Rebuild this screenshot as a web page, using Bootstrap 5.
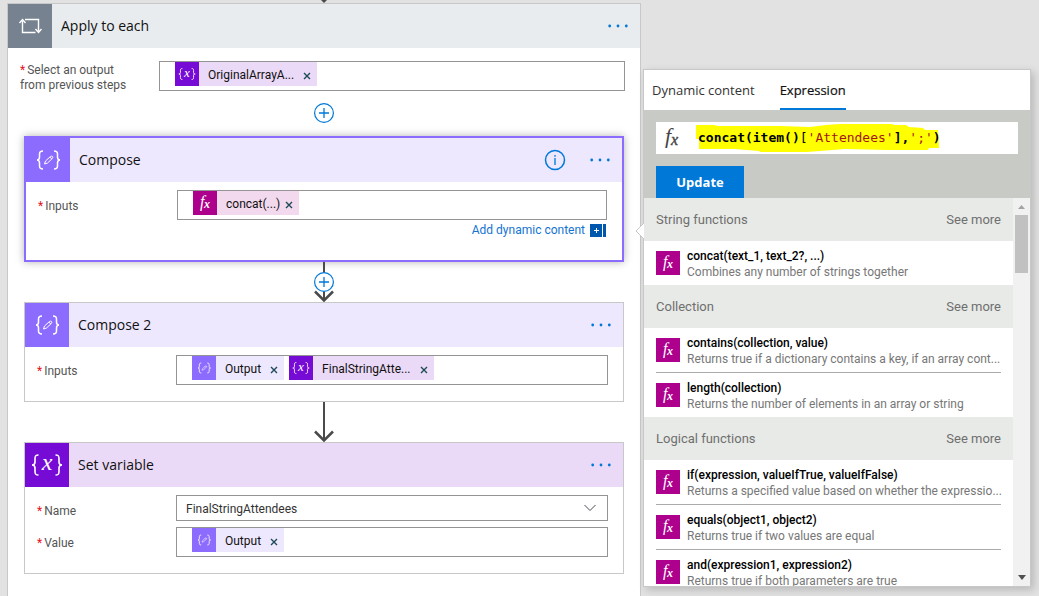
<!DOCTYPE html>
<html lang="en">
<head>
<meta charset="utf-8">
<meta name="viewport" content="width=device-width, initial-scale=1">
<title>Flow designer</title>
<link href="https://cdn.jsdelivr.net/npm/bootstrap@5.3.0/dist/css/bootstrap.min.css" rel="stylesheet">
<style>
  :root { --blue: #0078d7; --edge: #c8c8c8; --field: #949494; }
  body { background: #e2e2e2; color: #111; font: 12px/16px Roboto, sans-serif; }
  button { font: inherit; }
  svg text { font-family: "Liberation Serif", serif; font-style: italic; }

  .designer { gap: 2px; padding: 0 8px 0 7px; }
  .canvas { min-width: 0; }
  .incoming { height: 3px; }
  .scope { background: #fff; border: 1px solid var(--edge); border-bottom: 0; }

  /* step cards */
  .step { background: #fff; border: 1px solid var(--edge); margin: 0 16px; }
  .step.selected { border: 2px solid #8c6cff; box-shadow: 0 0 8px rgba(0,0,0,.3); }
  .step-head { height: 44px; padding-right: 12px; }
  .step-head h2 { font-family: "Open Sans", sans-serif; font-size: 14px; line-height: 20px; font-weight: 400; margin: 0; padding-left: 9px; }
  .tile { width: 44px; height: 44px; color: #fff; flex: none; }
  .t-loop { background: #e8ecef; } .t-loop .tile { background: #76828f; }
  .t-data { background: #eee8ff; } .t-data .tile { background: #8c6cff; }
  .t-var { background: #ebdaf7; } .t-var .tile { background: #770bd6; }
  .plain { background: none; border: 0; padding: 0; color: var(--blue); display: block; }
  .field-list { padding: 8px 15px 16px 12px; gap: 6px; }
  .selected .field-list { gap: 4px; }
  .scope-fields { padding: 13px 15px 10px 12px; }
  .field-row { display: flex; }
  .field-row > label { flex: 0 0 139px; color: #555; line-height: 15px; padding-top: 9px; }
  .field-row > label::before { content: "*"; color: #e81123; margin-right: 2px; }
  .scope-fields .field-row > label { padding-top: 2px; }
  .token-box { flex: 1 1 0; min-width: 0; height: 30px; border: 1px solid var(--field); background: #fff; padding-left: 15px; gap: 5px; display: flex; }
  .token-box input { flex: 1 1 0; min-width: 0; border: 0; outline: 0; background: none; height: 24px; }
  .field-row select.form-select { flex: 1 1 0; min-width: 0; height: 26px; border: 1px solid var(--field); border-radius: 0; padding: 3px 30px 0 9px; font-size: 12px; line-height: 21px; color: #333;
    background: #fff url("data:image/svg+xml,%3Csvg xmlns='http://www.w3.org/2000/svg' viewBox='0 0 12 8'%3E%3Cpath fill='none' stroke='%23514654' d='M.5 1 6 6.500 11.500 1'/%3E%3C/svg%3E") no-repeat right 11px center / 12px 8px; }
  .token { height: 24px; line-height: 24px; display: flex; align-items: center; padding-right: 6px; flex: none; }
  .token > svg { width: 24px; height: 24px; color: #fff; margin-right: 9px; }
  .token-text { padding-top: 2px; }
  .token button { background: none; border: 0; padding: 3px 0 0; margin-left: 9px; color: #1c4a57; line-height: 0; }
  .k-var { background: #ebdaf7; } .k-var > svg { background: #770bd6; }
  .k-data { background: #eee8ff; } .k-data > svg { background: #8c6cff; }
  .k-fx { background: #f2d9ed; } .k-fx > svg { background: #ad008c; }
  .k-fx button { margin-left: 5px; }
  .dynamic-link { color: #1473d2; text-decoration: none; gap: 5px; line-height: 13px; margin: 0 1px 7px 0; }
  .link-arrow { height: 40px; }
  .add-gap { margin-bottom: 13px; }

  /* expression flyout */
  .flyout { flex: 0 1 388px; min-width: 0; margin: 69px 0 9px; background: #fff; border: 1px solid var(--edge); box-shadow: 3px 3px 8px rgba(0,0,0,.18); }
  .caret { left: -9px; top: 152px; }
  .tabs { height: 40px; padding-left: 8px; gap: 25px; flex: none; }
  .tabs button { background: none; border: 0; border-bottom: 2px solid transparent; padding: 2px 0 0; font-family: "Open Sans", sans-serif; font-size: 13px; color: #333; }
  .tabs button.active { border-color: var(--blue); color: #111; -webkit-text-stroke: .2px; }
  .editor { background: #c8cac6; padding: 12px 12px 0; flex: none; }
  .formula { height: 32px; background: #fff; margin-bottom: 12px; }
  .formula .sign { width: 42px; height: 32px; color: #444; flex: none; }
  .code { font: 13px/32px "DejaVu Sans Mono", monospace; color: #000; white-space: nowrap; outline: 0; position: relative; }
  .code b { font-weight: 700; }
  .code i { font-style: normal; color: #a31515; }
  .marker { left: 40px; top: 2px; }
  .update { width: 88px; height: 32px; background: var(--blue); color: #fff; border: 0; font-family: "Open Sans", sans-serif; font-size: 13px; font-weight: 700; display: block; }
  .functions { flex: 1 1 0; min-height: 0; }
  .fn-list { min-width: 0; overflow: hidden; }
  .group { height: 43px; background: #e8eae7; padding: 0 12px; color: #6f6f6f; }
  .group h3 { font-size: 13px; font-weight: 400; margin: 0; }
  .group a { color: #6f6f6f; text-decoration: none; font-size: 13px; }
  .fn { margin: 0 12px; padding: 7px 0 5px; gap: 7px; }
  .fn + .fn { border-top: 1px solid #aaa; }
  .fn svg { width: 24px; height: 24px; background: #ad008c; color: #fff; flex: none; margin-top: 3px; }
  .fn-name { color: #000; font-weight: 500; }
  .fn-text { color: #777; white-space: nowrap; }
  .bar { width: 17px; background: #f1f1f1; flex: none; padding-bottom: 6px; }
  .thumb { width: 13px; height: 58px; background: #c1c1c1; }
</style>
<script src="https://cdn.jsdelivr.net/npm/bootstrap@5.3.0/dist/js/bootstrap.bundle.min.js"></script>
</head>
<body>
<svg class="d-none">
  <symbol id="braces" viewBox="0 0 44 44"><path fill="none" stroke="currentColor" stroke-width="1.500" d="M17 13c-3 0-3.500 1-3.500 3v3c0 2-.5 3-2.500 3 2 0 2.500 1 2.500 3v3c0 2 .5 3 3.500 3M28 13c3 0 3.500 1 3.500 3v3c0 2 .5 3 2.500 3-2 0-2.500 1-2.500 3v3c0 2-.5 3-3.500 3"/></symbol>
  <symbol id="data" viewBox="0 0 44 44"><use href="#braces"/><path fill="none" stroke="currentColor" stroke-width="1" d="m18.500 26 1-3 5-4.500q1.200-.8 2 0 .7.900 0 1.800L21.500 25zM23.800 19l2 2"/></symbol>
  <symbol id="var" viewBox="0 0 44 44"><path fill="none" stroke="currentColor" stroke-width="1.600" d="M13.500 12c-3 0-3.500 1-3.500 3.500V19c0 2-.5 3-3 3 2.500 0 3 1 3 3v3.500c0 2.500.5 3.500 3.500 3.500M30.500 12c3 0 3.500 1 3.500 3.500V19c0 2 .5 3 3 3-2.500 0-3 1-3 3v3.500c0 2.500-.5 3.500-3.500 3.500"/><text x="22" y="27" font-size="24" text-anchor="middle" fill="currentColor">x</text></symbol>
  <symbol id="fx" viewBox="0 0 24 24"><text x="7" y="16" font-size="16" fill="currentColor">f</text><text x="11" y="17" font-size="12" font-weight="700" fill="currentColor">x</text></symbol>
  <symbol id="dots" viewBox="0 0 20 4"><g fill="currentColor"><circle cx="1.700" cy="2" r="1.400"/><circle cx="10" cy="2" r="1.400"/><circle cx="18.300" cy="2" r="1.400"/></g></symbol>
  <symbol id="close" viewBox="0 0 8 8"><path stroke="currentColor" stroke-width="1.400" d="m1 1 6 6M7 1 1 7"/></symbol>
  <symbol id="plus" viewBox="0 0 20 20"><circle cx="10" cy="10" r="9.400" fill="#fff" stroke="currentColor" stroke-width="1.200"/><path stroke="currentColor" stroke-width="1.300" d="M5 10h10M10 5v10"/></symbol>
  <symbol id="arrow" viewBox="0 0 20 40"><path fill="none" stroke="#4a4a4a" stroke-width="2" d="M10 0v38"/><path fill="none" stroke="#4a4a4a" stroke-width="2.500" d="m1 29.500 9 9 9-9"/></symbol>
</svg>

<main class="designer d-flex vh-100">
  <section class="canvas flex-fill d-flex flex-column">
    <div class="incoming d-flex justify-content-center"><svg width="6" height="3"><path fill="#4a4a4a" d="M0 0h6L3 3z"/></svg></div>
    <div class="scope flex-fill">
      <header class="step-head t-loop d-flex align-items-center">
        <svg class="tile" viewBox="0 0 44 44"><g fill="none" stroke="#fff" stroke-width="1.400"><path d="M17 15.500h13.500V27M27.500 28.500H14.500V17"/><path d="m11.500 19 3-3.500 3 3.500M27.500 25l3 3.500 3-3.500"/></g></svg>
        <h2 class="me-auto">Apply to each</h2>
        <button class="plain" aria-label="More"><svg class="d-block" width="20" height="4"><use href="#dots"/></svg></button>
      </header>
      <div class="scope-fields">
        <div class="field-row">
          <label for="source">Select an output<br>from previous steps</label>
          <div class="token-box">
            <span class="token k-var"><svg><use href="#var"/></svg><span class="token-text">OriginalArrayA...</span><button aria-label="Remove"><svg width="8" height="8"><use href="#close"/></svg></button></span>
            <input id="source" type="text">
          </div>
        </div>
      </div>
      <div class="d-flex justify-content-center add-gap"><button class="plain" aria-label="Add step"><svg class="d-block" width="20" height="20"><use href="#plus"/></svg></button></div>

      <article class="step selected">
        <header class="step-head t-data d-flex align-items-center">
          <svg class="tile"><use href="#data"/></svg>
          <h2 class="me-auto">Compose</h2>
          <button class="plain me-4" aria-label="Information"><svg class="d-block" width="22" height="22"><circle cx="11" cy="11" r="9.500" fill="none" stroke="currentColor" stroke-width="1.500"/><path stroke="currentColor" stroke-width="1.300" d="M11 9v7M11 6v1.800"/></svg></button>
          <button class="plain" aria-label="More"><svg class="d-block" width="20" height="4"><use href="#dots"/></svg></button>
        </header>
        <div class="field-list d-flex flex-column">
          <div class="field-row">
            <label for="in1">Inputs</label>
            <div class="token-box">
              <span class="token k-fx"><svg><use href="#fx"/></svg><span class="token-text">concat(...)</span><button aria-label="Remove"><svg width="8" height="8"><use href="#close"/></svg></button></span>
              <input id="in1" type="text">
            </div>
          </div>
          <a href="#" class="dynamic-link d-flex align-items-center align-self-end">Add dynamic content
            <svg width="16" height="13"><path fill="#0057ae" d="M0 0h12v13H0zM13 0h3v13h-3z"/><path stroke="#fff" d="M4 6.500h5M6.500 4v5"/></svg></a>
        </div>
      </article>

      <div class="link-arrow position-relative d-flex justify-content-center">
        <svg width="20" height="40"><use href="#arrow"/></svg>
        <button class="plain position-absolute top-50 start-50 translate-middle" aria-label="Insert step"><svg class="d-block" width="20" height="20"><use href="#plus"/></svg></button>
      </div>

      <article class="step">
        <header class="step-head t-data d-flex align-items-center">
          <svg class="tile"><use href="#data"/></svg>
          <h2 class="me-auto">Compose 2</h2>
          <button class="plain" aria-label="More"><svg class="d-block" width="20" height="4"><use href="#dots"/></svg></button>
        </header>
        <div class="field-list d-flex flex-column">
          <div class="field-row">
            <label for="in2">Inputs</label>
            <div class="token-box">
              <span class="token k-data"><svg><use href="#data"/></svg><span class="token-text">Output</span><button aria-label="Remove"><svg width="8" height="8"><use href="#close"/></svg></button></span>
              <span class="token k-var"><svg><use href="#var"/></svg><span class="token-text">FinalStringAtte...</span><button aria-label="Remove"><svg width="8" height="8"><use href="#close"/></svg></button></span>
              <input id="in2" type="text">
            </div>
          </div>
        </div>
      </article>

      <div class="link-arrow d-flex justify-content-center"><svg width="20" height="40"><use href="#arrow"/></svg></div>

      <article class="step">
        <header class="step-head t-var d-flex align-items-center">
          <svg class="tile"><use href="#var"/></svg>
          <h2 class="me-auto">Set variable</h2>
          <button class="plain" aria-label="More"><svg class="d-block" width="20" height="4"><use href="#dots"/></svg></button>
        </header>
        <div class="field-list d-flex flex-column">
          <div class="field-row">
            <label for="name">Name</label>
            <select class="form-select" id="name"><option>FinalStringAttendees</option></select>
          </div>
          <div class="field-row">
            <label for="value">Value</label>
            <div class="token-box">
              <span class="token k-data"><svg><use href="#data"/></svg><span class="token-text">Output</span><button aria-label="Remove"><svg width="8" height="8"><use href="#close"/></svg></button></span>
              <input id="value" type="text">
            </div>
          </div>
        </div>
      </article>
    </div>
  </section>

  <aside class="flyout position-relative d-flex flex-column">
    <svg class="caret position-absolute" width="9" height="18"><path fill="#fff" stroke="#c8c8c8" d="M9 1 1 9l8 8"/></svg>
    <div class="tabs d-flex" role="tablist">
      <button role="tab">Dynamic content</button>
      <button role="tab" class="active" aria-selected="true">Expression</button>
    </div>
    <div class="editor">
      <div class="formula d-flex position-relative">
        <svg class="marker position-absolute" width="244" height="28"><path fill="#ff0" d="M0 1h18l4 1h62l30 1 16-2 14-1h52l2 1h12l3 2 14 1 2 2h13l1 18h-10l-1 2h-40l-43-1-38 3-21 1H66l-3-2-24-2H3V15H0z"/></svg>
        <svg class="sign" viewBox="0 0 42 32"><text x="9" y="21" font-size="22" fill="currentColor">f</text><text x="15" y="23" font-size="16" fill="currentColor" stroke="currentColor" stroke-width=".4">x</text></svg>
        <div class="code flex-fill" role="textbox" aria-label="Expression" contenteditable="true" spellcheck="false"><b>concat(item()</b>[<i>'Attendees'</i><b>],</b><i>';'</i><b>)</b></div>
      </div>
      <button class="update">Update</button>
    </div>
    <div class="functions d-flex">
      <div class="fn-list flex-fill">
        <div class="group d-flex align-items-center justify-content-between"><h3>String functions</h3><a href="#">See more</a></div>
        <div class="fn d-flex"><svg><use href="#fx"/></svg><div><div class="fn-name">concat(text_1, text_2?, ...)</div><div class="fn-text">Combines any number of strings together</div></div></div>
        <div class="group d-flex align-items-center justify-content-between"><h3>Collection</h3><a href="#">See more</a></div>
        <div class="fn d-flex"><svg><use href="#fx"/></svg><div><div class="fn-name">contains(collection, value)</div><div class="fn-text">Returns true if a dictionary contains a key, if an array cont...</div></div></div>
        <div class="fn d-flex"><svg><use href="#fx"/></svg><div><div class="fn-name">length(collection)</div><div class="fn-text">Returns the number of elements in an array or string</div></div></div>
        <div class="group d-flex align-items-center justify-content-between"><h3>Logical functions</h3><a href="#">See more</a></div>
        <div class="fn d-flex"><svg><use href="#fx"/></svg><div><div class="fn-name">if(expression, valueIfTrue, valueIfFalse)</div><div class="fn-text">Returns a specified value based on whether the expressio...</div></div></div>
        <div class="fn d-flex"><svg><use href="#fx"/></svg><div><div class="fn-name">equals(object1, object2)</div><div class="fn-text">Returns true if two values are equal</div></div></div>
        <div class="fn d-flex"><svg><use href="#fx"/></svg><div><div class="fn-name">and(expression1, expression2)</div><div class="fn-text">Returns true if both parameters are true</div></div></div>
      </div>
      <div class="bar d-flex flex-column align-items-center">
        <svg width="17" height="17"><path fill="#a3a3a3" d="M5 11h7L8.500 7z"/></svg>
        <div class="thumb mb-auto"></div>
        <svg width="8" height="5"><path fill="#505050" d="M0 0h8L4 5z"/></svg>
      </div>
    </div>
  </aside>
</main>
</body>
</html>
